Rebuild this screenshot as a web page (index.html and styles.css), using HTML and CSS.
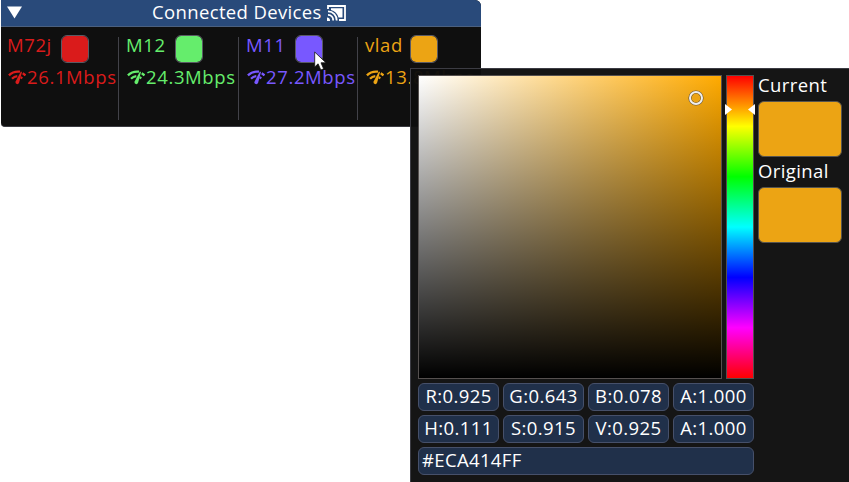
FILE: index.html
```html
<!DOCTYPE html>
<html lang="en">
<head>
<meta charset="utf-8">
<title>Connected Devices</title>
<link rel="stylesheet" href="styles.css">
</head>
<body>
<svg class="defs" aria-hidden="true">
  <symbol id="speed" viewBox="0 0 18 16">
    <path fill="none" stroke="currentColor" stroke-width="2.3" d="M.9 6.4Q5.4 1.9 12 2.7M14.7 4.2Q16.3 5.1 17.4 6.4M4 9.7Q6.2 7.4 9.3 7.1M12.8 8.2L14.2 9.5"/>
    <path fill="currentColor" d="M12.9 2.6L14 3L11.2 13.6Q10.5 15.6 8.7 15.1Q6.9 14.4 7.6 12.6Z"/>
  </symbol>
</svg>
<main class="window">
  <header class="titlebar">
    <svg class="collapse" viewBox="0 0 16 13"><path fill="#fff" d="M0 0H16L8 13Z"/></svg>
    <span class="title">Connected Devices</span>
    <svg class="cast" viewBox="0 0 19 16"><g fill="none" stroke="#fff" stroke-width="1.8"><path d="M1 4V1H18V15H12M1 6.3A8.7 8.7 0 0 1 9.7 15.5M1 9.8A5.2 5.2 0 0 1 6.2 15.5"/></g><path fill="#fff" d="M0 12.5A3 3 0 0 1 3 16H0ZM4 3.3H15.5V12.5H11.5Q9.5 6.2 4 5Z"/></svg>
  </header>
  <div class="devices">
    <section class="device red"><div class="name"><span>M72j</span><i class="swatch"></i></div><div class="rate"><svg><use href="#speed"/></svg><span>26.1Mbps</span></div></section>
    <section class="device green"><div class="name"><span>M12</span><i class="swatch"></i></div><div class="rate"><svg><use href="#speed"/></svg><span>24.3Mbps</span></div></section>
    <section class="device violet"><div class="name"><span>M11</span><i class="swatch"></i></div><div class="rate"><svg><use href="#speed"/></svg><span>27.2Mbps</span></div></section>
    <section class="device orange"><div class="name"><span>vlad</span><i class="swatch"></i></div><div class="rate"><svg><use href="#speed"/></svg><span>13.8Mbps</span></div></section>
  </div>
</main>
<svg class="cursor" viewBox="0 0 13 20"><path fill="#fff" stroke="#111" stroke-width=".8" d="M.7 1V16L4.1 12.8L6.8 19L9.6 17.8L7 11.8H12Z"/></svg>
<aside class="picker">
  <div class="controls">
    <div class="graphs">
      <div class="shade"><i class="ring"></i></div>
      <div class="hue"><i class="arrow left"></i><i class="arrow right"></i></div>
    </div>
    <div class="fields">
      <div class="field">R:0.925</div><div class="field">G:0.643</div><div class="field">B:0.078</div><div class="field">A:1.000</div>
      <div class="field">H:0.111</div><div class="field">S:0.915</div><div class="field">V:0.925</div><div class="field">A:1.000</div>
      <div class="field hex">#ECA414FF</div>
    </div>
  </div>
  <div class="compare">
    <div class="label current">Current</div><div class="sample"></div>
    <div class="label original">Original</div><div class="sample"></div>
  </div>
</aside>
</body>
</html>
```
FILE: styles.css
```css
* { box-sizing: border-box; }
body {
  margin: 0;
  width: 849px;
  height: 482px;
  overflow: hidden;
  background: #fff;
  color: #fff;
  font: 18.5px/26px "Open Sans", "Noto Sans", sans-serif;
}
svg { display: block; flex: none; }
.defs { position: absolute; width: 0; height: 0; }
.window {
  width: 480px;
  height: 127px;
  margin-left: 1px;
  background: #0f0f0f;
  border-bottom: 1px solid #39393f;
  border-radius: 0 6px 4px 4px;
  overflow: hidden;
}
.titlebar {
  display: flex;
  align-items: center;
  height: 27px;
  padding: 0 6px 1px;
  background: #294a7a;
  border-bottom: 1px solid #4b607f;
}
.collapse { width: 15px; height: 13px; }
.title { width: 170px; margin-left: 130px; line-height: 24px; padding-bottom: 2px; white-space: nowrap; letter-spacing: .36px; }
.cast { width: 19px; height: 16px; margin-left: 5px; }
.devices { display: flex; height: 99px; padding-top: 8px; }
.device { width: 118px; flex: none; padding-left: 6px; height: 83px; border-right: 1px solid #424249; margin-top: 2px; }
.green.device { width: 120px; padding-left: 7px; }
.violet.device { width: 119px; padding-left: 7px; }
.orange.device { padding-left: 7px; border: 0; }
.name { display: flex; height: 28px; margin-top: -2px; line-height: 20px; letter-spacing: .6px; }
.swatch { width: 28px; height: 28px; margin-left: auto; background: currentColor; border: 1px solid #5a5a64; border-radius: 6px; flex: none; }
.rate { display: flex; align-items: center; height: 28px; white-space: nowrap; letter-spacing: .62px; }
.rate svg { width: 18px; height: 16px; margin: 0 1px; }
.red { color: #da1b1b; }
.green { color: #65ed6c; }
.violet { color: #7858ff; }
.orange { color: #eca414; }
.red .name { width: 82px; }
.green .name { width: 77px; }
.violet .name { width: 77px; }
.orange .name { width: 73px; }
.swatch { background-clip: padding-box; }
.cursor { position: absolute; left: 314px; top: 51px; width: 13px; height: 20px; }
.picker {
  position: absolute;
  left: 410px;
  top: 68px;
  width: 440px;
  height: 415px;
  padding: 6px 7px;
  display: flex;
  gap: 4px;
  background: rgba(13, 13, 13, .967);
  border: 1px solid #3c3c43;
}
.controls { width: 336px; flex: none; }
.graphs { display: flex; gap: 4px; height: 304px; }
.shade, .hue { border: 1px solid #55504f; }
.shade {
  position: relative;
  width: 304px;
  background: linear-gradient(to top, #000, transparent), linear-gradient(to right, #fff, #ffaa00);
}
.ring { position: absolute; left: 270px; top: 15px; width: 14px; height: 14px; border: 2px solid #eee; border-radius: 50%; background: #eca414; box-shadow: 0 0 0 .6px #685334, inset 0 0 0 .6px #685334; }
.hue {
  position: relative;
  width: 28px;
  background: linear-gradient(red, yellow 16.67%, lime 33.33%, cyan 50%, blue 66.67%, magenta 83.33%, red);
}
.arrow { position: absolute; top: 28px; width: 7px; height: 11px; background: #fff; }
.left { left: -2px; clip-path: polygon(0 0, 100% 50%, 0 100%); }
.right { right: -2px; clip-path: polygon(100% 0, 0 50%, 100% 100%); }
.fields { display: grid; grid-template-columns: repeat(4, 81px); gap: 4px; margin-top: 4px; }
.field { height: 28px; border: 1px solid #46506a; border-radius: 6px; background: #20304a; text-align: center; line-height: 24px; white-space: nowrap; letter-spacing: .4px; }
.hex { grid-column: 1 / -1; text-align: left; padding-left: 3px; letter-spacing: .35px; }
.compare { width: 84px; }
.label { height: 26px; line-height: 20px; white-space: nowrap; letter-spacing: .4px; }
.sample { height: 56px; margin-bottom: 4px; background: #eca414; border: 1px solid #56544f; border-radius: 6px; }
```
